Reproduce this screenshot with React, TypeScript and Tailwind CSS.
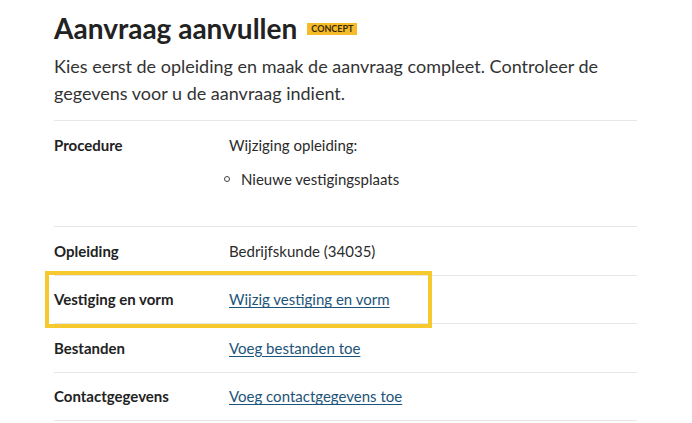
import React from 'react'

type Row = {
  label: string
  value?: string
  link?: string
  highlight?: boolean
}

const rows: Row[] = [
  { label: 'Opleiding', value: 'Bedrijfskunde (34035)' },
  { label: 'Vestiging en vorm', link: 'Wijzig vestiging en vorm', highlight: true },
  { label: 'Bestanden', link: 'Voeg bestanden toe' },
  { label: 'Contactgegevens', link: 'Voeg contactgegevens toe' },
]

export default function App() {
  return (
    <div className="min-h-screen bg-white font-['Lato',sans-serif] text-[#2b2b2b]">
      <main className="pl-[54px] pt-[11px] w-[637px]">
        <div className="flex items-center gap-[10px]">
          <h1 className="text-[28px] leading-[34px] font-bold text-[#222]">Aanvraag aanvullen</h1>
          <span className="mt-[2px] bg-[#f6bb2b] text-[#3a2b05] text-[9px] leading-[12px] font-bold px-[4px]">
            CONCEPT
          </span>
        </div>
        <p className="mt-[8px] text-[18px] leading-[27px] text-[#333]">
          Kies eerst de opleiding en maak de aanvraag compleet. Controleer de gegevens voor u de aanvraag indient.
        </p>

        <div className="mt-[13px] border-t border-[#e6e6e6] text-[15px] leading-[24px]">
          {/* procedure row has a list, so it is taller */}
          <div className="flex border-b border-[#e6e6e6] pt-3 pb-[35px]">
            <div className="w-[175px] shrink-0 font-bold text-[#222]">Procedure</div>
            <div>
              <div>Wijziging opleiding:</div>
              <ul className="mt-[10px]">
                <li className="flex items-center">
                  <span className="w-[6px] h-[6px] rounded-full border border-[#444] ml-[-5px] mr-[11px]" />
                  Nieuwe vestigingsplaats
                </li>
              </ul>
            </div>
          </div>

          {rows.map((r) => (
            <div key={r.label} className="relative flex border-b border-[#e6e6e6] py-[11.75px]">
              {r.highlight && (
                <span className="absolute left-[-9px] top-[-5px] w-[387px] h-[57px] border-[4px] border-[#f6c92e] pointer-events-none" />
              )}
              <div className="w-[175px] shrink-0 font-bold text-[#222]">{r.label}</div>
              {r.link ? (
                <a href="#" className="text-[#1d5479] underline underline-offset-2">
                  {r.link}
                </a>
              ) : (
                <div>{r.value}</div>
              )}
            </div>
          ))}
        </div>
      </main>
    </div>
  )
}
